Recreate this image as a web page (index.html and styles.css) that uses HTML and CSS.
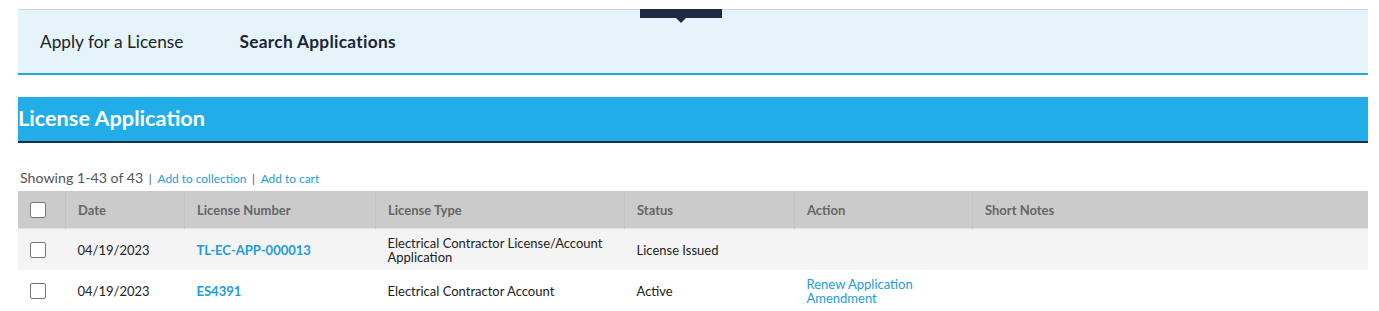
FILE: index.html
```html
<!DOCTYPE html>
<html lang="en">
<head>
  <meta charset="UTF-8">
  <title>License Application</title>
  <link rel="stylesheet" href="styles.css">
</head>
<body>
  <div class="page">
    <div class="top-tab"></div>
    <div class="tabs">
      <a class="tab">Apply for a License</a>
      <a class="tab active">Search Applications</a>
    </div>

    <h2 class="section-title">License Application</h2>

    <div class="summary">
      Showing 1-43 of 43
      <span class="sep">|</span> <a href="#">Add to collection</a>
      <span class="sep">|</span> <a href="#">Add to cart</a>
    </div>

    <table class="grid">
      <thead>
        <tr>
          <th class="col-check"><span class="box"></span></th>
          <th class="col-date">Date</th>
          <th class="col-num">License Number</th>
          <th class="col-type">License Type</th>
          <th class="col-status">Status</th>
          <th class="col-action">Action</th>
          <th>Short Notes</th>
        </tr>
      </thead>
      <tbody>
        <tr class="odd">
          <td class="col-check"><span class="box"></span></td>
          <td>04/19/2023</td>
          <td><a class="num" href="#">TL-EC-APP-000013</a></td>
          <td class="dark">Electrical Contractor License/Account Application</td>
          <td class="muted">License Issued</td>
          <td></td>
          <td></td>
        </tr>
        <tr>
          <td class="col-check"><span class="box"></span></td>
          <td>04/19/2023</td>
          <td><a class="num" href="#">ES4391</a></td>
          <td class="dark">Electrical Contractor Account</td>
          <td class="muted">Active</td>
          <td><a class="act" href="#">Renew Application</a><br><a class="act" href="#">Amendment</a></td>
          <td></td>
        </tr>
      </tbody>
    </table>
  </div>
</body>
</html>
```

FILE: styles.css
```css
body {
  margin: 0;
  font-family: Lato, "Open Sans", Arial, sans-serif;
  color: #222;
  background: #fff;
}
.page {
  margin: 0 11px 0 18px;
  position: relative;
}
.top-tab {
  position: absolute;
  left: 622px;
  top: 0;
  width: 82px;
  height: 9px;
  background: #1e2b43;
}
.top-tab::after {
  content: "";
  position: absolute;
  left: 36px;
  top: 9px;
  border-left: 5px solid transparent;
  border-right: 5px solid transparent;
  border-top: 5px solid #1e2b43;
}
.tabs {
  margin-top: 9px;
  border-top: 1px solid #cfd6da;
  border-bottom: 2px solid #2ba3d9;
  background: #e5f4fb;
  height: 63px;
  display: flex;
  align-items: center;
  padding-left: 22px;
  gap: 56px;
}
.tab {
  font-size: 17.3px;
  color: #222;
  padding-bottom: 1px;
}
.tab.active {
  font-weight: bold;
  color: #1b2537;
  letter-spacing: 0.3px;
}
.section-title {
  margin: 22px 0 0;
  height: 44px;
  line-height: 43px;
  background: #22ade8;
  border-bottom: 2px solid #12304a;
  color: #fff;
  font-size: 21.7px;
  font-weight: bold;
}
.summary {
  margin-top: 26px;
  padding-left: 2px;
  font-size: 14.2px;
  color: #555;
  height: 22px;
}
.summary a {
  font-size: 11.9px;
  color: #1c9be0;
  text-decoration: none;
}
.summary .sep {
  color: #555;
  font-size: 12px;
  margin: 0 2px;
}
.grid {
  width: 100%;
  border-collapse: collapse;
  font-size: 13px;
}
.grid th {
  background: #cbcbcb;
  color: #666;
  text-align: left;
  font-weight: bold;
  height: 37px;
  padding: 0 12px;
  border-left: 1px solid #c3c3c3;
}
.grid th:first-child {
  border-left: none;
}
.grid td {
  height: 41px;
  padding: 0 12px;
  color: #222;
  line-height: 14px;
}
.grid tr.odd td {
  background: #f4f4f4;
  border-top: 1px solid #e0e0e0;
}
.col-check { width: 23px; }
.col-date { width: 94px; }
.col-num { width: 166px; }
.col-type { width: 224px; }
.col-status { width: 145px; }
.col-action { width: 153px; }
.box {
  display: block;
  width: 14px;
  height: 14px;
  border: 1px solid #777;
  border-radius: 2px;
  background: #fff;
}
.num {
  color: #1c9be0;
  font-weight: bold;
  text-decoration: none;
}
.dark { color: #111; }
.muted { color: #555; }
.act {
  color: #1c9be0;
  text-decoration: none;
}
```
